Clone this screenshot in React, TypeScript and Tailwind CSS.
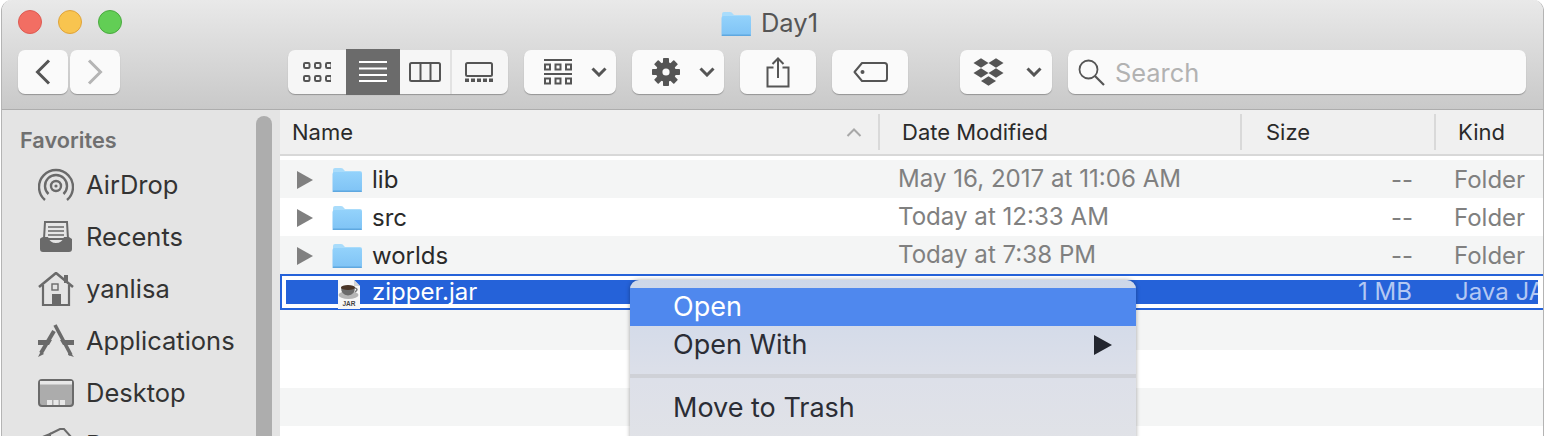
import type { ReactNode } from "react";

const font = { fontFamily: '"Inter", "Liberation Sans", sans-serif' };

function Chevron({ className = "" }: { className?: string }) {
  return (
    <svg width="16" height="10" viewBox="0 0 16 10" className={className}>
      <path d="M1.5 1.5 L8 8 L14.5 1.5" fill="none" stroke="#555" strokeWidth="3" />
    </svg>
  );
}

function Folder({ width = 30, height = 25 }: { width?: number; height?: number }) {
  return (
    <svg width={width} height={height} viewBox="0 0 30 25">
      <defs>
        <linearGradient id="folderBody" x1="0" y1="0" x2="0" y2="1">
          <stop offset="0" stopColor="#93d2fb" />
          <stop offset="1" stopColor="#7fc3f5" />
        </linearGradient>
      </defs>
      <path d="M1 3 Q1 1 3 1 H9 Q11 1 12 3 L13 4 H28 Q30 4 30 6 V7 H1 Z" fill="#a9dcfb" />
      <rect x="0.5" y="5" width="29.5" height="20" rx="2" fill="url(#folderBody)" />
      <rect x="0.5" y="23.5" width="29.5" height="1.5" rx="0.7" fill="#5fa8e0" />
    </svg>
  );
}

function JarIcon() {
  return (
    <svg width="24" height="29" viewBox="0 0 24 29">
      <path d="M1 0 H17 L23 6 V29 H1 Z" fill="#f7f7f7" />
      <path d="M17 0 L23 6 H17 Z" fill="#d4d4d4" />
      <ellipse cx="11.5" cy="15" rx="10" ry="4" fill="#b5b5b5" />
      <path d="M4 7 H18 Q18 15 11 15.5 Q4 15 4 7 Z" fill="#6a6a6a" />
      <ellipse cx="11" cy="7.5" rx="7" ry="2.5" fill="#4a3526" />
      <path d="M18 8 Q22 9 18 12" fill="none" stroke="#777" strokeWidth="1.5" />
      <text x="12" y="26" textAnchor="middle" fontSize="6.5" fontWeight="700" fill="#444" fontFamily="Liberation Sans, sans-serif">JAR</text>
    </svg>
  );
}

function ToolButton({ className, children }: { className: string; children: ReactNode }) {
  return (
    <div className={`flex h-[44px] items-center rounded-[7px] bg-[#fafafa] shadow-[0_1px_1px_rgba(0,0,0,0.28)] ${className}`}>
      {children}
    </div>
  );
}

function ViewSwitcher() {
  const squares = [0, 11, 22].flatMap((x) => [0, 13].map((y) => ({ x, y })));
  return (
    <div className="ml-[168px] flex h-[44px] w-[220px] items-center rounded-[7px] bg-[#f6f6f6] shadow-[0_1px_1px_rgba(0,0,0,0.28)]">
      <div className="flex h-[44px] w-[58px] items-center justify-center">
        <svg width="28" height="20" viewBox="0 0 28 20">
          {squares.map((s) => (
            <rect key={`${s.x}-${s.y}`} x={s.x + 1} y={s.y + 1} width="5.5" height="5" rx="1.2" fill="none" stroke="#555" strokeWidth="2" />
          ))}
        </svg>
      </div>
      <div className="flex h-[46px] w-[54px] items-center justify-center bg-[#6b6b6b]">
        <svg width="28" height="22" viewBox="0 0 28 22">
          {[1, 7.5, 14, 20].map((y) => (
            <rect key={y} x="0" y={y - 1} width="28" height="2" fill="#fff" />
          ))}
        </svg>
      </div>
      <div className="flex h-[44px] w-[52px] items-center justify-center border-r-2 border-[#e2e2e2]">
        <svg width="32" height="20" viewBox="0 0 32 20">
          <rect x="1" y="1" width="30" height="18" rx="1.5" fill="none" stroke="#555" strokeWidth="2" />
          <path d="M11.5 1 V19 M21.5 1 V19" stroke="#555" strokeWidth="2" />
        </svg>
      </div>
      <div className="flex h-[44px] w-[54px] items-center justify-center">
        <svg width="28" height="20" viewBox="0 0 28 20">
          <rect x="1" y="1" width="26" height="13" rx="1.5" fill="none" stroke="#555" strokeWidth="2" />
          {[0, 6, 12, 18, 24].map((x) => (
            <rect key={x} x={x} y="16.5" width="4" height="3.5" fill="#555" />
          ))}
        </svg>
      </div>
    </div>
  );
}

function Gear() {
  const teeth = [0, 45, 90, 135];
  return (
    <svg width="28" height="28" viewBox="0 0 28 28">
      {teeth.map((a) => (
        <rect key={a} x="11" y="0" width="6" height="28" rx="0.8" fill="#555" transform={`rotate(${a} 14 14)`} />
      ))}
      <circle cx="14" cy="14" r="10" fill="#555" />
      <circle cx="14" cy="14" r="3.6" fill="#fafafa" />
    </svg>
  );
}

function Dropbox() {
  const diamonds = [
    [8, 6],
    [23, 6],
    [8, 16],
    [23, 16],
    [15.5, 24],
  ];
  return (
    <svg width="31" height="30" viewBox="0 0 31 30">
      {diamonds.map(([x, y]) => (
        <polygon key={`${x}-${y}`} points={`${x - 7.5},${y} ${x},${y - 4.8} ${x + 7.5},${y} ${x},${y + 4.8}`} fill="#555" />
      ))}
    </svg>
  );
}

function Toolbar() {
  return (
    <div className="flex h-[44px] items-center pl-[16px]">
      <ToolButton className="w-[50px] justify-center">
        <svg width="16" height="26" viewBox="0 0 16 26">
          <path d="M14 1.5 L2.5 13 L14 24.5" fill="none" stroke="#555" strokeWidth="3" />
        </svg>
      </ToolButton>
      <ToolButton className="ml-[2px] w-[50px] justify-center">
        <svg width="16" height="26" viewBox="0 0 16 26">
          <path d="M2 1.5 L13.5 13 L2 24.5" fill="none" stroke="#b5b5b5" strokeWidth="3" />
        </svg>
      </ToolButton>
      <ViewSwitcher />
      <ToolButton className="ml-[16px] w-[92px] pl-[20px]">
        <svg width="28" height="26" viewBox="0 0 28 26">
          <rect x="0" y="0" width="28" height="2" fill="#555" />
          <rect x="0" y="14" width="28" height="2" fill="#555" />
          {[0, 10.5, 21].map((x) => (
            <g key={x}>
              <rect x={x + 1} y="5.5" width="5" height="5" fill="none" stroke="#555" strokeWidth="2" />
              <rect x={x + 1} y="19.5" width="5" height="5" fill="none" stroke="#555" strokeWidth="2" />
            </g>
          ))}
        </svg>
        <Chevron className="ml-[19px]" />
      </ToolButton>
      <ToolButton className="ml-[16px] w-[92px] pl-[20px]">
        <Gear />
        <Chevron className="ml-[19px]" />
      </ToolButton>
      <ToolButton className="ml-[16px] w-[76px] justify-center">
        <svg width="24" height="31" viewBox="0 0 24 31">
          <path d="M7.5 10.5 H1.5 V29.5 H22.5 V10.5 H16.5" fill="none" stroke="#555" strokeWidth="2" />
          <path d="M12 21 V1.5 M6.5 7 L12 1.5 L17.5 7" fill="none" stroke="#555" strokeWidth="2" />
        </svg>
      </ToolButton>
      <ToolButton className="ml-[16px] w-[76px] justify-center">
        <svg width="35" height="20" viewBox="0 0 35 20">
          <path d="M9 1 H31.5 Q34 1 34 3.5 V16.5 Q34 19 31.5 19 H9 L1.5 10 Z" fill="none" stroke="#555" strokeWidth="2" strokeLinejoin="round" />
          <circle cx="9.5" cy="10" r="2" fill="#555" />
        </svg>
      </ToolButton>
      <ToolButton className="ml-[52px] w-[92px] pl-[13px]">
        <Dropbox />
        <Chevron className="ml-[22px]" />
      </ToolButton>
      <ToolButton className="ml-[16px] w-[458px] pl-[10px]">
        <svg width="27" height="27" viewBox="0 0 27 27">
          <circle cx="10.5" cy="10.5" r="9" fill="none" stroke="#555" strokeWidth="1.8" />
          <path d="M17 17 L26 26" stroke="#555" strokeWidth="2.2" />
        </svg>
        <span className="ml-[10px] pt-[2px] text-[25.4px] text-[#b2b2b2]">Search</span>
      </ToolButton>
    </div>
  );
}

const sidebarItems: { label: string; icon: ReactNode }[] = [
  {
    label: "AirDrop",
    icon: (
      <svg width="36" height="34" viewBox="0 0 36 34">
        <g fill="none" stroke="#6a6a6a" strokeWidth="2.4">
          <path d="M7 32 A17 17 0 1 1 29 32" />
          <path d="M10.5 26 A11 11 0 1 1 25.5 26" />
          <circle cx="18" cy="18" r="5" />
        </g>
        <circle cx="18" cy="18" r="1.6" fill="#6a6a6a" />
      </svg>
    ),
  },
  {
    label: "Recents",
    icon: (
      <svg width="32" height="32" viewBox="0 0 32 32">
        <path d="M5 1 H27 L28 18 H4 Z" fill="#e6e6e6" stroke="#6a6a6a" strokeWidth="2" />
        <path d="M8 6 H24 M8 10 H24 M8 14 H24" stroke="#6a6a6a" strokeWidth="1.6" />
        <path d="M0 18 Q0 17 3 16 V16 H8 Q10 22 16 22 Q22 22 24 16 H29 L32 18 V28 Q32 31 29 31 H3 Q0 31 0 28 Z" fill="#6a6a6a" />
      </svg>
    ),
  },
  {
    label: "yanlisa",
    icon: (
      <svg width="36" height="34" viewBox="0 0 36 34">
        <path d="M1 15 L18 1 L35 15" fill="none" stroke="#6a6a6a" strokeWidth="2.6" />
        <rect x="26" y="3" width="4" height="8" fill="#6a6a6a" />
        <path d="M5 13 V33 H31 V13" fill="none" stroke="#6a6a6a" strokeWidth="2.2" />
        <rect x="14" y="12" width="6" height="6" fill="none" stroke="#6a6a6a" strokeWidth="1.4" />
        <rect x="14" y="22" width="9" height="11" fill="#6a6a6a" />
      </svg>
    ),
  },
  {
    label: "Applications",
    icon: (
      <svg width="36" height="34" viewBox="0 0 36 34">
        <rect x="0" y="16" width="36" height="5" fill="#6a6a6a" />
        <path d="M17 1 L33 31" stroke="#6a6a6a" strokeWidth="3.6" />
        <path d="M16 7 L3 29" stroke="#6a6a6a" strokeWidth="4" />
        <path d="M3 27 L0 33 L6 30 Z M31 27 L36 33 L30 31 Z" fill="#6a6a6a" />
        <path d="M11 21 H25 L22 16 H14 Z" fill="#e4e4e4" />
      </svg>
    ),
  },
  {
    label: "Desktop",
    icon: (
      <svg width="36" height="28" viewBox="0 0 36 28">
        <rect x="1" y="1" width="34" height="26" rx="3" fill="#acacac" stroke="#6a6a6a" strokeWidth="2" />
        <rect x="2" y="2" width="32" height="3.5" fill="#e8e8e8" />
        <rect x="9" y="21" width="5" height="5" fill="#e8e8e8" />
        <rect x="15.5" y="21" width="5" height="5" fill="#e8e8e8" />
        <rect x="22" y="21" width="5" height="5" fill="#e8e8e8" />
      </svg>
    ),
  },
  {
    label: "Documents",
    icon: (
      <svg width="36" height="34" viewBox="0 0 36 34">
        <path d="M2 10 L12 6 L12 34 H2 Z" fill="#e4e4e4" stroke="#6a6a6a" strokeWidth="2" />
        <path d="M12 6 L22 1 H26 L34 10 V34 H12 Z" fill="#e4e4e4" stroke="#6a6a6a" strokeWidth="2" />
      </svg>
    ),
  },
];

function Sidebar() {
  return (
    <aside className="relative h-full w-[278px] shrink-0 overflow-hidden bg-[#e4e4e4]">
      <div className="pl-[18px] pt-[17px] text-[21.7px] font-semibold leading-[27px] text-[#707070]">Favorites</div>
      <div className="mt-[5px]">
        {sidebarItems.map((item) => (
          <div key={item.label} className="flex h-[52px] items-center">
            <div className="ml-[36px] flex w-[36px] shrink-0 justify-center">{item.icon}</div>
            <span className="ml-[12px] text-[25.5px] text-[#333]">{item.label}</span>
          </div>
        ))}
      </div>
      {/* overlay scrollbar */}
      <div className="absolute left-[254px] top-[6px] h-[340px] w-[16px] rounded-[8px] bg-[#adadad]" />
    </aside>
  );
}

const rows = [
  { name: "lib", date: "May 16, 2017 at 11:06 AM", size: "--", kind: "Folder" },
  { name: "src", date: "Today at 12:33 AM", size: "--", kind: "Folder" },
  { name: "worlds", date: "Today at 7:38 PM", size: "--", kind: "Folder" },
];

function HeaderCell({ label, className, children }: { label: string; className: string; children?: ReactNode }) {
  return (
    <div className={`flex items-center border-[#d9d9d9] ${className}`}>
      <span>{label}</span>
      {children}
    </div>
  );
}

function ContextMenu() {
  return (
    <div className="absolute left-[350px] top-[170px] h-[200px] w-[506px] overflow-hidden rounded-t-[9px] bg-gradient-to-b from-[#cdd7e9] via-[#dde0e9] to-[#e3e4e6] text-[27px] text-[#2b2d35] shadow-[0_0_4px_rgba(0,0,0,0.35)]">
      <div className="mt-[8px] flex h-[38px] items-center bg-[#4f88ee] pl-[43px] text-white">Open</div>
      <div className="flex h-[38px] items-center justify-between pl-[43px] pr-[24px]">
        <span>Open With</span>
        <svg width="18" height="20" viewBox="0 0 18 20">
          <path d="M0 0 L18 10 L0 20 Z" fill="#23262f" />
        </svg>
      </div>
      <div className="mt-[10px] h-[4px] bg-[#cfd1d7]" />
      <div className="mt-[11px] flex h-[38px] items-center pl-[43px]">Move to Trash</div>
    </div>
  );
}

function FileList() {
  return (
    <main className="relative h-full min-w-0 flex-1 overflow-hidden bg-white">
      <div className="flex h-[46px] items-center border-b-2 border-[#d8d8d8] bg-[#f0f0f0] text-[22px] text-[#2a2a2a]">
        <HeaderCell label="Name" className="h-[36px] w-[600px] justify-between border-r-2 pl-[12px] pr-[16px]">
          <svg width="16" height="9" viewBox="0 0 16 9">
            <path d="M1.5 8 L8 1.5 L14.5 8" fill="none" stroke="#a8a8a8" strokeWidth="2" />
          </svg>
        </HeaderCell>
        <HeaderCell label="Date Modified" className="h-[36px] w-[362px] border-r-2 pl-[22px]" />
        <HeaderCell label="Size" className="h-[36px] w-[194px] border-r-2 pl-[24px]" />
        <HeaderCell label="Kind" className="h-[36px] pl-[22px]" />
      </div>
      <div className="mt-[4px]">
        {rows.map((row, i) => (
          <div key={row.name} className={`flex h-[38px] items-center pt-[1px] text-[24px] ${i % 2 === 0 ? "bg-[#f4f5f5]" : "bg-white"}`}>
            <div className="flex w-[600px] items-center">
              <svg width="16" height="18" viewBox="0 0 16 18" className="ml-[17px]">
                <path d="M0 0 L16 9 L0 18 Z" fill="#808080" />
              </svg>
              <div className="ml-[19px]">
                <Folder />
              </div>
              <span className="ml-[10px] text-[#2a2a2a]">{row.name}</span>
            </div>
            <div className="w-[362px] pl-[18px] text-[24.1px] text-[#808080]">{row.date}</div>
            <div className="w-[171px] text-right text-[#808080]">{row.size}</div>
            <div className="ml-[41px] text-[#808080]">{row.kind}</div>
          </div>
        ))}
        {/* selected row */}
        <div className="flex h-[36px] items-center border-2 border-r-0 border-[#2562d9] bg-white pl-[4px] pr-[5px]">
          <div className="flex h-[24px] w-full min-w-0 items-center bg-[#2562d9] text-[24px]">
            <div className="flex h-[24px] w-[595px] shrink-0 items-center">
              <div className="ml-[51px] h-[24px] self-start">
                <JarIcon />
              </div>
              <span className="ml-[11px] text-white">zipper.jar</span>
            </div>
            <div className="w-[531px] shrink-0 text-right text-[#b4c8f3]">1 MB</div>
            <div className="ml-[43px] min-w-0 flex-1 overflow-hidden whitespace-nowrap text-[#b4c8f3]">Java JAR file</div>
          </div>
        </div>
        <div className="h-[40px] bg-[#f4f5f5]" />
        <div className="h-[38px] bg-white" />
        <div className="h-[38px] bg-[#f4f5f5]" />
      </div>
      <ContextMenu />
    </main>
  );
}

export default function App() {
  return (
    <div className="h-[436px] w-[1546px] overflow-hidden bg-white" style={font}>
      <div className="ml-[1px] flex h-[436px] w-[1543px] flex-col overflow-hidden rounded-t-[11px] border-x border-[#b4b4b4]">
        <header className="h-[110px] shrink-0 border-b border-[#adadad] bg-gradient-to-b from-[#e9e9e9] to-[#c9c9c9]">
          <div className="relative flex h-[50px] items-center justify-center pb-[3px] pr-[6px]">
            <div className="absolute left-[16px] top-[10px] flex gap-[16px]">
              <div className="h-[24px] w-[24px] rounded-full border border-[#dd5a52] bg-[#f26e63]" />
              <div className="h-[24px] w-[24px] rounded-full border border-[#dfa33a] bg-[#f8c44f]" />
              <div className="h-[24px] w-[24px] rounded-full border border-[#4aa93f] bg-[#62ce55]" />
            </div>
            <Folder width={30} height={25} />
            <span className="ml-[10px] text-[25.5px] text-[#555]">Day1</span>
          </div>
          <Toolbar />
        </header>
        <div className="flex min-h-0 flex-1">
          <Sidebar />
          <FileList />
        </div>
      </div>
    </div>
  );
}
